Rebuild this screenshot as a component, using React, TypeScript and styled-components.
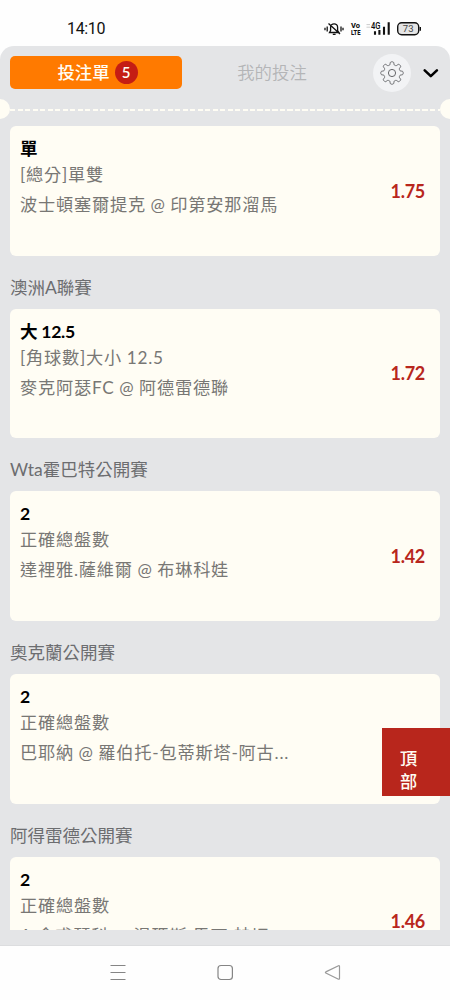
import React from "react";
import styled, { createGlobalStyle } from "styled-components";

const Global = createGlobalStyle`
  * { box-sizing: border-box; }
  body { margin: 0; background: #fefefe; font-family: Lato, "Noto Sans CJK TC", sans-serif; }
`;

const Screen = styled.div`
  width: 450px;
  height: 1000px;
  display: flex;
  flex-direction: column;
  overflow: hidden;
  background: #fefefe;
`;

const StatusBar = styled.header`
  height: 46px;
  flex: none;
  display: flex;
  justify-content: space-between;
  padding: 19px 28px 0 67px;
`;

const Clock = styled.span`
  font: 400 16px/20px Roboto, sans-serif;
  letter-spacing: -0.35px;
  color: #111;
`;

const Panel = styled.main`
  height: 900px;
  flex: none;
  background: #e4e5e7;
  border-bottom: 1px solid #dcdddf;
  border-radius: 14px 14px 0 0;
  overflow: hidden;
  position: relative;
`;

const Tabs = styled.div`
  height: 53px;
  display: flex;
  align-items: center;
  padding-left: 10px;
`;

const Tab = styled.button<{ $active?: boolean }>`
  width: ${(p) => (p.$active ? 172 : 180)}px;
  height: 33px;
  border: 0;
  padding: ${(p) => (p.$active ? "0 0 0 3px" : "0")};
  border-radius: 5px;
  display: flex;
  align-items: center;
  justify-content: center;
  gap: 5px;
  background: ${(p) => (p.$active ? "#ff7a00" : "transparent")};
  color: ${(p) => (p.$active ? "#fffdf4" : "#b4b5b7")};
  font: ${(p) => (p.$active ? 500 : 350)} 17.4px/33px Lato, "Noto Sans CJK TC", sans-serif;
`;

const Count = styled.span`
  width: 23px;
  height: 23px;
  border-radius: 50%;
  background: #c51d14;
  font-size: 15px;
  font-weight: 600;
  line-height: 23px;
  text-align: center;
`;

const Gear = styled.button`
  width: 38px;
  height: 38px;
  margin-left: 11px;
  padding: 0;
  border: 0;
  border-radius: 50%;
  background: #f2f3f5;
  display: grid;
  place-items: center;
`;

const Collapse = styled.span`
  display: flex;
  margin-left: 10px;
`;

const Tear = styled.div`
  height: 20px;
  display: flex;
  align-items: center;
  justify-content: space-between;
  margin: 0 -10px;
`;

const Notch = styled.i`
  width: 20px;
  height: 20px;
  border-radius: 50%;
  background: #fffdf4;
`;

const Dash = styled.div`
  flex: 1;
  height: 2px;
  margin-top: 2px;
  background: repeating-linear-gradient(90deg, #fffdf4 0 5.4px, transparent 5.4px 7.5px);
`;

const List = styled.div`
  height: 811px;
  overflow: hidden;
  padding: 7px 10px 0;
`;

const League = styled.h2`
  margin: 0;
  height: 53px;
  padding-top: 19px;
  font-size: 17.5px;
  font-weight: 400;
  line-height: 26px;
  color: #6c6d70;
`;

const Card = styled.article`
  height: 129.65px;
  display: flex;
  align-items: center;
  justify-content: space-between;
  padding: 0 15px 0 10px;
  border-radius: 6px;
  background: #fffdf4;
`;

const Info = styled.div`
  height: 100%;
  padding-top: 10px;
`;

const Pick = styled.div`
  font-size: 17.6px;
  font-weight: 700;
  line-height: 26px;
  letter-spacing: -0.3px;
  color: #000;
`;

const Detail = styled.div<{ $height: number }>`
  font-size: 17.2px;
  font-weight: 400;
  line-height: ${(p) => p.$height}px;
  letter-spacing: 0.8px;
  word-spacing: -0.6px;
  white-space: nowrap;
  color: #787774;
`;

const Odds = styled.strong`
  font-size: 18px;
  font-weight: 700;
  letter-spacing: -0.3px;
  color: #b8261c;
`;

const TopButton = styled.button`
  position: absolute;
  right: 0;
  top: 682px;
  width: 68px;
  height: 68px;
  padding: 0 31px 0 18px;
  border: 0;
  background: #b8261c;
  color: #fffdf4;
  text-align: left;
  font: 500 17.2px/23px Lato, "Noto Sans CJK TC", sans-serif;

  span {
    display: block;
    padding-top: 16px;
  }
`;

const NavBar = styled.nav`
  height: 54px;
  display: flex;
  justify-content: center;
  align-items: center;
  gap: 83px;
`;

const bets = [
  { league: "", pick: "單", market: "[總分]單雙", match: "波士頓塞爾提克 @ 印第安那溜馬", odds: "1.75" },
  { league: "澳洲A聯賽", pick: "大 12.5", market: "[角球數]大小 12.5", match: "麥克阿瑟FC @ 阿德雷德聯", odds: "1.72" },
  { league: "Wta霍巴特公開賽", pick: "2", market: "正確總盤數", match: "達裡雅.薩維爾 @ 布琳科娃", odds: "1.42" },
  { league: "奧克蘭公開賽", pick: "2", market: "正確總盤數", match: "巴耶納 @ 羅伯托-包蒂斯塔-阿古...", odds: "" },
  { league: "阿得雷德公開賽", pick: "2", market: "正確總盤數", match: "A.舍甫琴科 @ 湯瑪斯.馬丁.赫切", odds: "1.46" },
];

const gearPoints = () => {
  const pts: string[] = [];
  for (let i = 0; i <= 160; i++) {
    const a = (i / 160) * Math.PI * 2;
    const wave = Math.tanh(2.2 * Math.cos(8 * a)) / Math.tanh(2.2);
    const r = 9.7 + 1.5 * wave;
    pts.push(`${(12 + r * Math.sin(a)).toFixed(2)},${(12 - r * Math.cos(a)).toFixed(2)}`);
  }
  return pts.join(" ");
};

const StatusIcons = () => (
  <svg width="98" height="20" viewBox="324 19 98 20" fill="none" stroke="#111">
    <path d="M329.5 32.5h9.5l-1.4-2v-3.2a3.5 3.5 0 0 0-7 0v3.2zM332.8 34.3h2.8M328.5 23.5l11.5 10.5" strokeWidth="1.3" />
    <path d="M327.2 26.5v5M325 27.8v2.4M341 26.5v5M343 27.8v2.4" strokeWidth="1.3" />
    <g fill="#111" stroke="none" fontFamily="Roboto, sans-serif" fontWeight="800">
      <text x="351" y="28" fontSize="8" textLength="9" lengthAdjust="spacingAndGlyphs">Vo</text>
      <text x="351" y="35.3" fontSize="8" textLength="9.5" lengthAdjust="spacingAndGlyphs">LTE</text>
      <text x="371" y="28.6" fontSize="8.2" fontWeight="600" textLength="9.5" lengthAdjust="spacingAndGlyphs">4G</text>
    </g>
    <path d="M366.5 24.6h3.5M366.5 27.2h3.5" stroke="#ccc" />
    <path d="M375 34.8v-3.6M379.4 34.8v-4.8M384 34.8v-8M388.7 34.8V22.2" strokeWidth="2.1" />
    <rect x="397.7" y="22.8" width="21" height="12" rx="4" fill="#e5e5e5" strokeWidth="1.4" />
    <path d="M420.3 27v3.7" strokeWidth="1.4" />
    <text x="408.2" y="32.3" fontSize="9.5" textAnchor="middle" fill="#444" stroke="none" fontFamily="Roboto, sans-serif">73</text>
  </svg>
);

export default function App() {
  return (
    <Screen>
      <Global />
      <StatusBar>
        <Clock>14:10</Clock>
        <StatusIcons />
      </StatusBar>
      <Panel>
        <Tabs>
          <Tab $active>投注單<Count>5</Count></Tab>
          <Tab>我的投注</Tab>
          <Gear aria-label="設定">
            <svg width="24" height="24" viewBox="0 0 24 24" fill="none" stroke="#66676a" strokeWidth="1">
              <polygon points={gearPoints()} strokeLinejoin="round" />
              <circle cx="12" cy="12" r="3.6" />
            </svg>
          </Gear>
          <Collapse>
            <svg width="18" height="12" viewBox="0 0 18 12" fill="none" stroke="#000" strokeWidth="2.6" strokeLinecap="round" strokeLinejoin="round">
              <path d="M3.7 3.4l6.1 5.7 6.1-5.7" />
            </svg>
          </Collapse>
        </Tabs>
        <Tear><Notch /><Dash /><Notch /></Tear>
        <List>
          {bets.map((b) => (
            <React.Fragment key={b.match}>
              {b.league && <League>{b.league}</League>}
              <Card>
                <Info>
                  <Pick>{b.pick}</Pick>
                  <Detail $height={26}>{b.market}</Detail>
                  <Detail $height={34}>{b.match}</Detail>
                </Info>
                <Odds>{b.odds}</Odds>
              </Card>
            </React.Fragment>
          ))}
        </List>
        <TopButton><span>頂部</span></TopButton>
      </Panel>
      <NavBar>
        <svg width="24" height="24" viewBox="0 0 24 24" stroke="#858585" strokeWidth="1.1"><path d="M4.5 4.5h15M4.5 11.5h15M4.5 18.5h15" /></svg>
        <svg width="24" height="24" viewBox="0 0 24 24" fill="none" stroke="#858585" strokeWidth="1.2"><rect x="5" y="4.5" width="14.4" height="14" rx="3" /></svg>
        <svg width="24" height="24" viewBox="0 0 24 24" fill="none" stroke="#999" strokeWidth="1.2" strokeLinejoin="round"><path d="M5.8 10.9Q5 11.4 5.8 12L18.5 18.2Q19.5 18.4 19.5 17.4V5.4Q19.5 4.4 18.5 4.7Z" /></svg>
      </NavBar>
    </Screen>
  );
}
